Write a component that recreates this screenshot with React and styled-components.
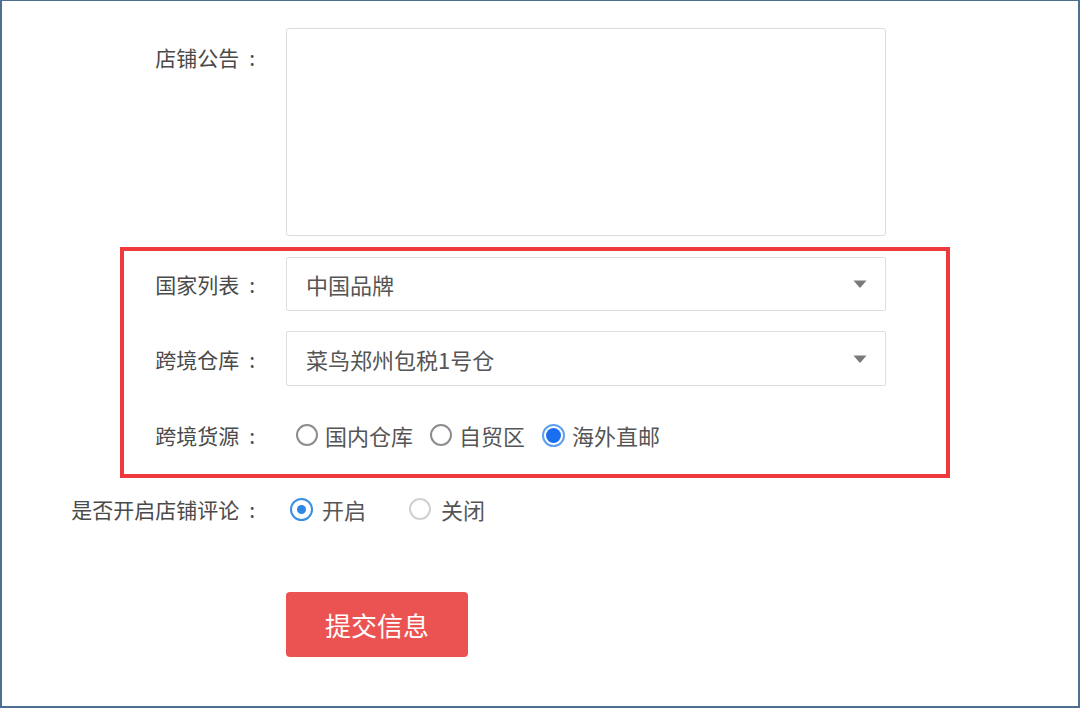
import React from 'react';
import styled, { createGlobalStyle, css } from 'styled-components';

const Global = createGlobalStyle`
  html, body { margin: 0; padding: 0; background: #fff; }
  body { font-family: "Noto Sans CJK SC", "Noto Sans", sans-serif; }
  * { box-sizing: border-box; }
`;

const Frame = styled.div`
  width: 1080px;
  height: 708px;
  border: 2px solid #4e6f8e;
  border-top-width: 1px;
  background: #fff;
  padding-top: 27px;
  display: flex;
  flex-direction: column;
`;

const Row = styled.div`
  display: flex;
  align-items: ${(p) => p.$align || 'center'};
  margin-top: ${(p) => p.$mt || 0}px;
`;

const Label = styled.div`
  width: ${(p) => p.$w}px;
  flex: none;
  margin-right: 31px;
  text-align: right;
  font-size: 21px;
  line-height: 30px;
  color: #4a4a4a;
  padding-top: ${(p) => p.$pt || 0}px;
  white-space: nowrap;
  &::after {
    content: ${(p) => (p.$empty ? '""' : '":"')};
    margin-left: 10px;
  }
`;

const TextArea = styled.textarea`
  width: 600px;
  height: 208px;
  border: 1px solid #dcdcdc;
  border-radius: 3px;
  background: #fff;
  resize: none;
  outline: none;
  font: inherit;
`;

const Group = styled.div`
  margin: 11px 0 0 118px;
  width: 830px;
  border: 4px solid #ee393d;
  padding: 6px 0 24px;
  display: flex;
  flex-direction: column;
`;

const Select = styled.div`
  width: 600px;
  height: ${(p) => p.$h || 54}px;
  border: 1px solid #dedede;
  border-radius: 2px;
  background: #fff;
  display: flex;
  align-items: center;
  justify-content: space-between;
  padding: 0 18px 0 19px;
  font-size: 22px;
  color: #555;
`;

const Options = styled.div`
  display: flex;
  align-items: center;
  height: 30px;
  padding-left: ${(p) => p.$pl}px;
  gap: ${(p) => p.$gap}px;
`;

const Option = styled.label`
  display: flex;
  align-items: center;
  gap: ${(p) => p.$gap}px;
  font-size: 22px;
  line-height: 30px;
  color: #555;
`;

const radioVariants = {
  plain: css`
    width: 22px;
    height: 22px;
    border: 2px solid #8d8d8d;
  `,
  muted: css`
    width: 22px;
    height: 22px;
    border: 2px solid #d0d0d0;
  `,
  filled: css`
    width: 23px;
    height: 23px;
    border: 2px solid #5e9ff0;
    &::after {
      content: '';
      position: absolute;
      inset: 2px;
      border-radius: 50%;
      background: #1a6ff0;
    }
  `,
  ring: css`
    width: 23px;
    height: 23px;
    border: 2px solid #3a8ee6;
    &::after {
      content: '';
      position: absolute;
      left: 50%;
      top: 50%;
      width: 9px;
      height: 9px;
      margin: -4.5px 0 0 -4.5px;
      border-radius: 50%;
      background: #2d87e4;
    }
  `,
};

const Radio = styled.span`
  position: relative;
  flex: none;
  border-radius: 50%;
  background: #fff;
  ${(p) => radioVariants[p.$variant]}
`;

const Button = styled.button`
  width: 182px;
  height: 65px;
  border: none;
  border-radius: 4px;
  background: #ea5352;
  color: #fff;
  font-family: inherit;
  font-size: 26px;
  cursor: pointer;
`;

const Caret = () => (
  <svg width="14" height="8" viewBox="0 0 14 8">
    <path d="M0.5 0.5 H13.5 L7.8 7.3 Q7 8 6.2 7.3 Z" fill="#7a7a7a" />
  </svg>
);

export default function App() {
  return (
    <>
      <Global />
      <Frame>
        <Row $align="flex-start">
          <Label $w={253} $pt={14}>店铺公告</Label>
          <TextArea readOnly />
        </Row>

        <Group>
          <Row>
            <Label $w={131}>国家列表</Label>
            <Select>
              <span>中国品牌</span>
              <Caret />
            </Select>
          </Row>
          <Row $mt={20}>
            <Label $w={131}>跨境仓库</Label>
            <Select $h={55}>
              <span>菜鸟郑州包税1号仓</span>
              <Caret />
            </Select>
          </Row>
          <Row $mt={34}>
            <Label $w={131}>跨境货源</Label>
            <Options $pl={10} $gap={17}>
              <Option $gap={7}>
                <Radio $variant="plain" />
                国内仓库
              </Option>
              <Option $gap={7}>
                <Radio $variant="plain" />
                自贸区
              </Option>
              <Option $gap={7}>
                <Radio $variant="filled" />
                海外直邮
              </Option>
            </Options>
          </Row>
        </Group>

        <Row $mt={16}>
          <Label $w={253}>是否开启店铺评论</Label>
          <Options $pl={4} $gap={43}>
            <Option $gap={9}>
              <Radio $variant="ring" />
              开启
            </Option>
            <Option $gap={10}>
              <Radio $variant="muted" />
              关闭
            </Option>
          </Options>
        </Row>

        <Row $mt={68}>
          <Label $w={253} $empty />
          <Button>提交信息</Button>
        </Row>
      </Frame>
    </>
  );
}
